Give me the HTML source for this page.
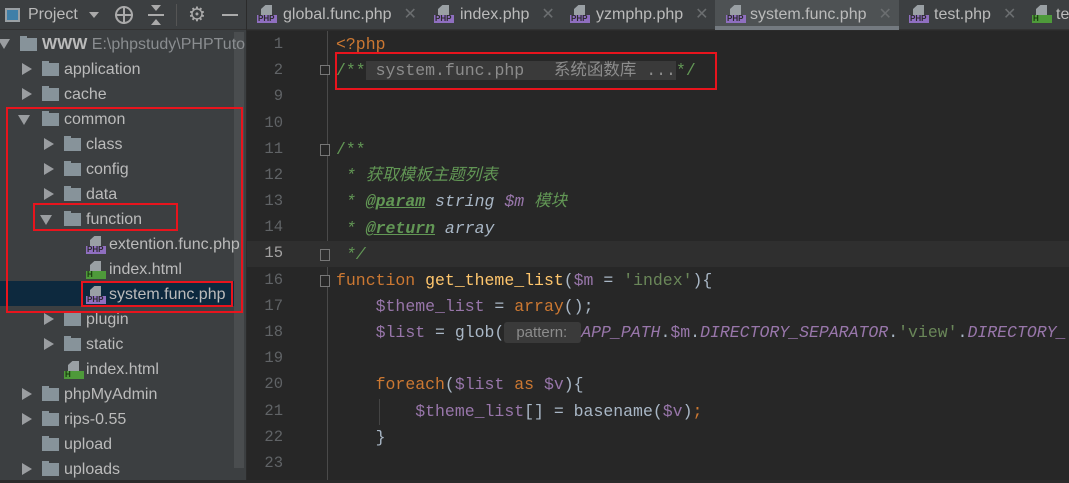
<!DOCTYPE html>
<html><head><meta charset="utf-8"><style>
*{margin:0;padding:0;box-sizing:border-box}
body{width:1069px;height:480px;overflow:hidden;background:#2b2b2b;font-family:"Liberation Sans","Noto Sans CJK SC",sans-serif;position:relative}
.abs{position:absolute}
#side{left:0;top:0;width:246px;height:480px;background:#3c3f41}
#top{left:0;top:0;width:246px;height:30px;background:#3c3f41;border-bottom:1px solid #323232;color:#bbb;font-size:16px}
.row{position:absolute;height:25px;line-height:27px;font-size:16px;color:#bbbbbb;white-space:nowrap}
.arr{position:absolute;width:0;height:0}
.ar{border-left:10px solid #9a9da0;border-top:6px solid transparent;border-bottom:6px solid transparent}
.ad{border-top:10px solid #9a9da0;border-left:6px solid transparent;border-right:6px solid transparent}
.fold{position:absolute;width:17px;height:13px;background:#87939a}
.fold:before{content:"";position:absolute;left:0;top:-2px;width:7px;height:3px;background:#87939a}
.fi{position:absolute;width:20px;height:18px}
.fi .pg{position:absolute;left:4px;top:0;width:11px;height:10px;background:#9aa0a4;clip-path:polygon(40% 0,100% 0,100% 100%,0 100%,0 40%)}
.fi .lb{position:absolute;left:0;top:10px;width:20px;height:8px;font:bold 8px/8px "Liberation Sans",sans-serif;color:#2b2b2b;padding-left:1px}
.php .lb{background:#8f6fc0}
.htm .lb{background:#4e9a3a;color:#1a3a10}
#tabs{left:247px;top:0;width:822px;height:30px;background:#3c3f41;border-bottom:1px solid #323232}
.tab{position:absolute;top:0;height:30px;line-height:30px;font-size:16px;color:#bbbbbb;white-space:nowrap}
.tab .x{color:#6b6e70;margin-left:12px}
.ln{position:absolute;width:36px;text-align:right;left:247px;font:15.5px "Liberation Mono",monospace;color:#606366}
.cl{position:absolute;left:336px;font:16.5px/26px "Liberation Mono","Noto Sans CJK SC",monospace;color:#a9b7c6;white-space:pre}
.k{color:#cc7832}.f{color:#ffc66d}.v{color:#9876aa}.s{color:#6a8759}.c{color:#629755;font-style:italic}
.t{color:#629755;font-weight:bold;text-decoration:underline;font-style:italic}.i{font-style:italic;color:#9876aa}
.red{position:absolute;border:2px solid #e8141d}
</style></head><body>
<div id="side" class="abs"></div>
<div class="abs" style="left:234px;top:32px;width:10px;height:436px;background:#4a4d4f"></div>
<div class="abs" style="left:0;top:281px;width:234px;height:25px;background:#0d293e"></div>
<div id="top" class="abs">
 <div class="abs" style="left:5px;top:8px;width:15px;height:14px;border:2px solid #9aa0a4;background:#3f7fa8"></div>
 <div class="abs" style="left:28px;top:4px;line-height:22px">Project</div>
 <div class="abs" style="left:89px;top:12px;border-top:6px solid #aaa;border-left:5px solid transparent;border-right:5px solid transparent"></div>
 <div class="abs" style="left:115px;top:6px;width:18px;height:18px;border:2px solid #aaa;border-radius:50%"></div>
 <div class="abs" style="left:123px;top:6px;width:2px;height:18px;background:#aaa"></div>
 <div class="abs" style="left:115px;top:14px;width:18px;height:2px;background:#aaa"></div>
 <div class="abs" style="left:148px;top:14px;width:16px;height:2px;background:#aaa"></div>
 <div class="abs" style="left:151px;top:5px;border-top:6px solid #aaa;border-left:5px solid transparent;border-right:5px solid transparent"></div>
 <div class="abs" style="left:151px;top:19px;border-bottom:6px solid #aaa;border-left:5px solid transparent;border-right:5px solid transparent"></div>
 <div class="abs" style="left:176px;top:4px;width:1px;height:22px;background:#555"></div>
 <div class="abs" style="left:188px;top:2px;font-size:20px;color:#aaa">⚙</div>
 <div class="abs" style="left:222px;top:14px;width:16px;height:2px;background:#aaa"></div>
</div>

<!-- tree -->
<div class="arr ad" style="left:-2px;top:39px"></div><div class="fold" style="left:20px;top:38px"></div>
<div class="row" style="left:42px;top:31px"><b>WWW</b> <span style="color:#8a8d90">E:\phpstudy\PHPTuto</span></div>

<div class="arr ar" style="left:22px;top:63px"></div><div class="fold" style="left:42px;top:63px"></div><div class="row" style="left:64px;top:56px">application</div>
<div class="arr ar" style="left:22px;top:88px"></div><div class="fold" style="left:42px;top:88px"></div><div class="row" style="left:64px;top:81px">cache</div>
<div class="arr ad" style="left:18px;top:115px"></div><div class="fold" style="left:42px;top:113px"></div><div class="row" style="left:64px;top:106px">common</div>
<div class="arr ar" style="left:44px;top:138px"></div><div class="fold" style="left:64px;top:138px"></div><div class="row" style="left:86px;top:131px">class</div>
<div class="arr ar" style="left:44px;top:163px"></div><div class="fold" style="left:64px;top:163px"></div><div class="row" style="left:86px;top:156px">config</div>
<div class="arr ar" style="left:44px;top:188px"></div><div class="fold" style="left:64px;top:188px"></div><div class="row" style="left:86px;top:181px">data</div>
<div class="arr ad" style="left:40px;top:215px"></div><div class="fold" style="left:64px;top:213px"></div><div class="row" style="left:86px;top:206px">function</div>
<div class="fi php" style="left:86px;top:236px"><div class="pg"></div><div class="lb">PHP</div></div><div class="row" style="left:109px;top:231px">extention.func.php</div>
<div class="fi htm" style="left:86px;top:261px"><div class="pg"></div><div class="lb">H</div></div><div class="row" style="left:109px;top:256px">index.html</div>
<div class="fi php" style="left:86px;top:286px"><div class="pg"></div><div class="lb">PHP</div></div><div class="row" style="left:109px;top:281px">system.func.php</div>
<div class="arr ar" style="left:44px;top:313px"></div><div class="fold" style="left:64px;top:313px"></div><div class="row" style="left:86px;top:306px">plugin</div>
<div class="arr ar" style="left:44px;top:338px"></div><div class="fold" style="left:64px;top:338px"></div><div class="row" style="left:86px;top:331px">static</div>
<div class="fi htm" style="left:64px;top:361px"><div class="pg"></div><div class="lb">H</div></div><div class="row" style="left:86px;top:356px">index.html</div>
<div class="arr ar" style="left:22px;top:388px"></div><div class="fold" style="left:42px;top:388px"></div><div class="row" style="left:64px;top:381px">phpMyAdmin</div>
<div class="arr ar" style="left:22px;top:413px"></div><div class="fold" style="left:42px;top:413px"></div><div class="row" style="left:64px;top:406px">rips-0.55</div>
<div class="fold" style="left:42px;top:438px"></div><div class="row" style="left:64px;top:431px">upload</div>
<div class="arr ar" style="left:22px;top:463px"></div><div class="fold" style="left:42px;top:463px"></div><div class="row" style="left:64px;top:456px">uploads</div>

<!-- tabs -->
<div id="tabs" class="abs">
 <div class="abs" style="left:468px;top:0;width:184px;height:30px;background:#4e5254;border-bottom:4px solid #747a80"></div>
 <div class="fi php" style="left:10px;top:5px"><div class="pg"></div><div class="lb">PHP</div></div><div class="tab" style="left:36px">global.func.php<span class="x">✕</span></div>
 <div class="fi php" style="left:187px;top:5px"><div class="pg"></div><div class="lb">PHP</div></div><div class="tab" style="left:213px">index.php<span class="x">✕</span></div>
 <div class="fi php" style="left:323px;top:5px"><div class="pg"></div><div class="lb">PHP</div></div><div class="tab" style="left:349px">yzmphp.php<span class="x">✕</span></div>
 <div class="fi php" style="left:479px;top:5px"><div class="pg"></div><div class="lb">PHP</div></div><div class="tab" style="left:503px">system.func.php<span class="x">✕</span></div>
 <div class="fi php" style="left:662px;top:5px"><div class="pg"></div><div class="lb">PHP</div></div><div class="tab" style="left:687px">test.php<span class="x">✕</span></div>
 <div class="fi htm" style="left:785px;top:5px"><div class="pg"></div><div class="lb">H</div></div><div class="tab" style="left:809px">te</div>
</div>

<!-- editor -->
<div class="abs" style="left:247px;top:31px;width:822px;height:449px;background:#272727"></div>
<div class="abs" style="left:327px;top:31px;width:1px;height:449px;background:#4a4a4a"></div>
<div class="abs" style="left:247px;top:241px;width:822px;height:26px;background:#2f2f2f"></div>
<div class="abs" style="left:246px;top:0;width:1px;height:480px;background:#2b2b2b"></div>

<div class="ln" style="top:35px">1</div><div class="ln" style="top:61px">2</div><div class="ln" style="top:87px">9</div>
<div class="ln" style="top:114px">10</div><div class="ln" style="top:140px">11</div><div class="ln" style="top:166px">12</div>
<div class="ln" style="top:192px">13</div><div class="ln" style="top:218px">14</div><div class="ln" style="top:244px;color:#a4a3a3">15</div>
<div class="ln" style="top:271px">16</div><div class="ln" style="top:297px">17</div><div class="ln" style="top:323px">18</div>
<div class="ln" style="top:349px">19</div><div class="ln" style="top:375px">20</div><div class="ln" style="top:402px">21</div>
<div class="ln" style="top:428px">22</div><div class="ln" style="top:454px">23</div>

<div class="abs" style="left:320px;top:65px;width:10px;height:10px;border:1px solid #777;background:#272727"></div>
<div class="abs" style="left:320px;top:144px;width:10px;height:12px;border:1px solid #777;background:#272727"></div>
<div class="abs" style="left:320px;top:249px;width:10px;height:12px;border:1px solid #777;background:#2f2f2f"></div>
<div class="abs" style="left:320px;top:275px;width:10px;height:12px;border:1px solid #777;background:#272727"></div>
<div class="abs" style="left:379px;top:399px;width:1px;height:26px;background:#444"></div>

<div class="cl" style="top:32px"><span class="k">&lt;?php</span></div>
<div class="cl" style="top:58px"><span class="c" style="font-style:normal">/**</span><span style="background:#3a3a3a;color:#8c8c8c"> system.func.php   系统函数库 ...</span><span class="c" style="font-style:normal">*/</span></div>
<div class="cl" style="top:137px"><span class="c" style="font-style:normal">/**</span></div>
<div class="cl" style="top:163px"><span class="c"> * 获取模板主题列表</span></div>
<div class="cl" style="top:189px"><span class="c"> * </span><span class="t">@param</span><i> string </i><span class="i">$m</span><span class="c"> 模块</span></div>
<div class="cl" style="top:216px"><span class="c"> * </span><span class="t">@return</span><i> array</i></div>
<div class="cl" style="top:242px"><span class="c"> */</span></div>
<div class="cl" style="top:268px"><span class="k">function</span> <span class="f">get_theme_list</span>(<span class="v">$m</span> = <span class="s">'index'</span>){</div>
<div class="cl" style="top:294px">    <span class="v">$theme_list</span> = <span class="k">array</span>();</div>
<div class="cl" style="top:320px">    <span class="v">$list</span> = glob(<span style="background:#3a3a3a;color:#8c8c8c;font:15px 'Liberation Sans',sans-serif;padding:2px 14px 2px 12px;border-radius:3px">pattern:</span><span class="i">APP_PATH</span>.<span class="v">$m</span>.<span class="i">DIRECTORY_SEPARATOR</span>.<span class="s">'view'</span>.<span class="i">DIRECTORY_</span></div>
<div class="cl" style="top:372px">    <span class="k">foreach</span>(<span class="v">$list</span> <span class="k">as</span> <span class="v">$v</span>){</div>
<div class="cl" style="top:399px">        <span class="v">$theme_list</span>[] = basename(<span class="v">$v</span>)<span class="k">;</span></div>
<div class="cl" style="top:425px">    }</div>

<!-- red boxes -->
<div class="red" style="left:6px;top:107px;width:237px;height:206px"></div>
<div class="red" style="left:33px;top:203px;width:145px;height:28px"></div>
<div class="red" style="left:81px;top:281px;width:152px;height:26px"></div>
<div class="red" style="left:335px;top:52px;width:382px;height:38px"></div>
</body></html>
